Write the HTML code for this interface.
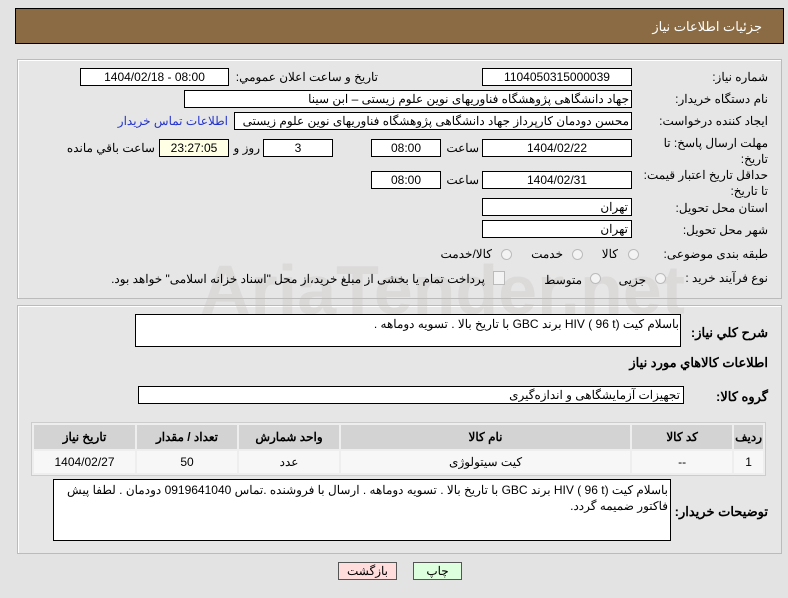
<!DOCTYPE html>
<html><head><meta charset="utf-8"><style>
body{margin:0;width:788px;height:598px;background:#e3e3e3;font-family:Tahoma,"Liberation Sans","Noto Sans CJK SC",sans-serif;font-size:12px;color:#000;position:relative;overflow:hidden}
.a{position:absolute;white-space:nowrap}
.hdr{left:15px;top:8px;width:767px;height:34px;background:#8b6b43;border:1px solid #000}
.pnl{border:1px solid #bbb;background:#e6e6e6;box-shadow:inset 1px 1px 0 #fff}
.box{position:absolute;background:#fff;border:1px solid #000;line-height:16px;text-align:center;box-sizing:border-box;height:18px}
.lb{position:absolute;white-space:nowrap;direction:rtl;text-align:right}
.r{position:absolute;width:11px;height:11px;border-radius:50%;border:1px solid #bbb;background:#f3f3f3;box-sizing:border-box}
table{position:absolute;border-collapse:separate;border-spacing:2px;background:#eee;border:1px solid #ccc}
th{background:#d3d3d3;height:22px;font-weight:bold;font-size:12px}
td{background:#f7f7f7;height:20px;text-align:center}
</style></head><body>
<div class="a hdr"></div>
<div class="lb" style="right:26px;top:19px;color:#fff;font-size:13px">جزئیات اطلاعات نیاز</div>
<div class="a pnl" style="left:17px;top:59px;width:763px;height:238px"></div>
<div class="a pnl" style="left:17px;top:305px;width:763px;height:247px"></div>

<div class="a" style="left:200px;top:250px;font-size:70px;font-weight:bold;color:rgba(200,190,190,0.3)">AriaTender.net</div>

<div class="lb" style="right:20px;top:70px">شماره نیاز:</div>
<div class="box" style="left:482px;top:68px;width:150px">1104050315000039</div>
<div class="lb" style="right:410px;top:70px">تاريخ و ساعت اعلان عمومي:</div>
<div class="box" style="left:80px;top:68px;width:149px">1404/02/18 - 08:00</div>

<div class="lb" style="right:20px;top:92px">نام دستگاه خریدار:</div>
<div class="box" style="left:184px;top:90px;width:448px;text-align:right;padding-right:2px;direction:rtl">جهاد دانشگاهی پژوهشگاه فناوریهای نوین علوم زیستی – ابن سینا</div>

<div class="lb" style="right:20px;top:114px">ایجاد کننده درخواست:</div>
<div class="box" style="left:234px;top:112px;width:398px;text-align:right;padding-right:2px;direction:rtl">محسن دودمان کارپرداز جهاد دانشگاهی پژوهشگاه فناوریهای نوین علوم زیستی</div>
<div class="lb" style="right:560px;top:114px;color:#2233cc">اطلاعات تماس خریدار</div>

<div class="lb" style="right:20px;top:135px;line-height:16px">مهلت ارسال پاسخ: تا<br>تاریخ:</div>
<div class="box" style="left:482px;top:139px;width:150px">1404/02/22</div>
<div class="lb" style="right:309px;top:141px">ساعت</div>
<div class="box" style="left:371px;top:139px;width:70px">08:00</div>
<div class="box" style="left:263px;top:139px;width:70px">3</div>
<div class="lb" style="right:528px;top:141px">روز و</div>
<div class="box" style="left:159px;top:139px;width:70px;background:#ffffe6">23:27:05</div>
<div class="lb" style="right:633px;top:141px">ساعت باقي مانده</div>

<div class="lb" style="right:20px;top:167px;line-height:16px">حداقل تاریخ اعتبار قیمت:<br>تا تاریخ:</div>
<div class="box" style="left:482px;top:171px;width:150px">1404/02/31</div>
<div class="lb" style="right:309px;top:173px">ساعت</div>
<div class="box" style="left:371px;top:171px;width:70px">08:00</div>

<div class="lb" style="right:20px;top:201px">استان محل تحویل:</div>
<div class="box" style="left:482px;top:198px;width:150px;text-align:right;padding-right:3px">تهران</div>
<div class="lb" style="right:20px;top:223px">شهر محل تحویل:</div>
<div class="box" style="left:482px;top:220px;width:150px;text-align:right;padding-right:3px">تهران</div>

<div class="lb" style="right:20px;top:247px">طبقه بندی موضوعی:</div>
<div class="r" style="left:628px;top:249px"></div><div class="lb" style="right:170px;top:247px">کالا</div>
<div class="r" style="left:572px;top:249px"></div><div class="lb" style="right:225px;top:247px">خدمت</div>
<div class="r" style="left:501px;top:249px"></div><div class="lb" style="right:296px;top:247px">کالا/خدمت</div>

<div class="lb" style="right:20px;top:271px">نوع فرآیند خرید :</div>
<div class="r" style="left:655px;top:273px"></div><div class="lb" style="right:142px;top:273px">جزیی</div>
<div class="r" style="left:590px;top:273px"></div><div class="lb" style="right:206px;top:273px">متوسط</div>
<div class="a" style="left:493px;top:271px;width:10px;height:12px;border:1px solid #bbb;background:#f3f3f3"></div>
<div class="lb" style="right:303px;top:272px">پرداخت تمام یا بخشی از مبلغ خرید،از محل "اسناد خزانه اسلامی" خواهد بود.</div>

<div class="lb" style="right:20px;top:325px;font-weight:bold;font-size:13px">شرح کلي نياز:</div>
<div class="a" style="left:135px;top:314px;width:546px;height:33px;background:#fff;border:1px solid #000;box-sizing:border-box"></div>
<div class="lb" style="right:109px;top:317px">باسلام کیت (HIV ( 96 t برند GBC با  تاریخ بالا . تسویه دوماهه .</div>

<div class="lb" style="right:20px;top:355px;font-weight:bold;font-size:13px">اطلاعات کالاهاي مورد نياز</div>

<div class="lb" style="right:20px;top:389px;font-weight:bold;font-size:13px">گروه کالا:</div>
<div class="box" style="left:138px;top:386px;width:546px;text-align:right;padding-right:3px;direction:rtl">تجهیزات آزمایشگاهی و اندازه‌گیری</div>

<table style="left:31px;top:422px;width:735px;direction:rtl">
<tr><th style="width:24px">ردیف</th><th style="width:98px">کد کالا</th><th>نام کالا</th><th style="width:98px">واحد شمارش</th><th style="width:98px">تعداد / مقدار</th><th style="width:99px">تاریخ نیاز</th></tr>
<tr><td>1</td><td>--</td><td>کیت سیتولوژی</td><td>عدد</td><td>50</td><td>1404/02/27</td></tr>
</table>

<div class="lb" style="right:20px;top:504px;font-weight:bold;font-size:13px">توضیحات خریدار:</div>
<div class="a" style="left:53px;top:479px;width:618px;height:62px;background:#fff;border:1px solid #000;box-sizing:border-box"></div>
<div class="lb" style="right:120px;top:482px;width:612px;white-space:normal;line-height:16px">باسلام کیت (HIV ( 96 t برند GBC با  تاریخ بالا . تسویه دوماهه . ارسال با فروشنده .تماس  0919641040 دودمان . لطفا پیش فاکتور ضمیمه گردد.</div>

<div class="box" style="left:338px;top:562px;width:59px;background:#fdd;border-color:#555">بازگشت</div>
<div class="box" style="left:413px;top:562px;width:49px;background:#dfd;border-color:#555">چاپ</div>
</body></html>
